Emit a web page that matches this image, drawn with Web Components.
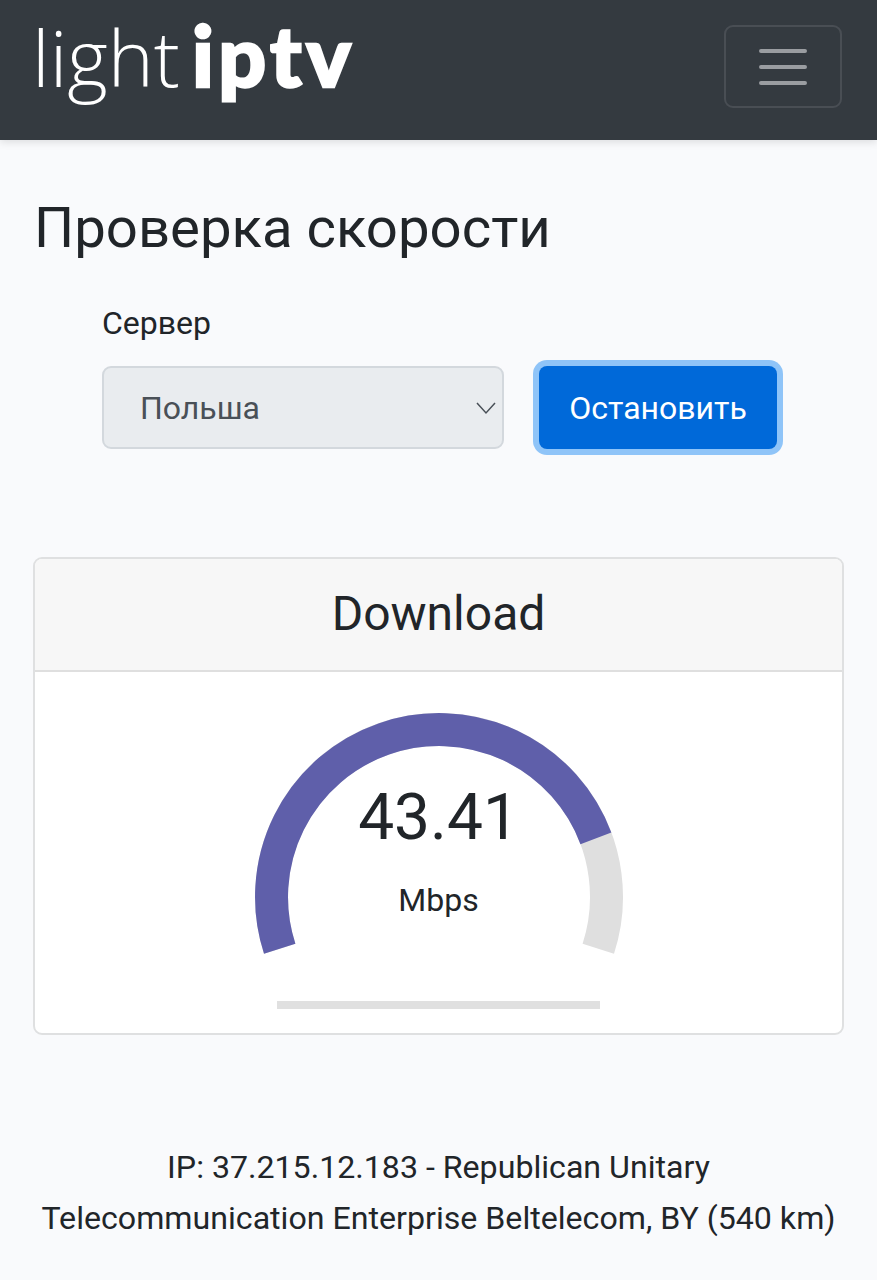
<!DOCTYPE html>
<html lang="ru">
<head>
<meta charset="utf-8">
<title>Проверка скорости</title>
<style>
    html, body {
        margin: 0;
        padding: 0;
        background: #f9fafc;
        color: #212529;
        font-family: Roboto, "Liberation Sans", sans-serif;
    }
    speed-page {
        display: block;
    }
</style>
</head>
<body>
<speed-page>
    <speed-navbar></speed-navbar>
    <speed-form></speed-form>
    <speed-card title="Download">
        <speed-gauge value="43.41" unit="Mbps"></speed-gauge>
    </speed-card>
    <speed-footer>
        IP: 37.215.12.183 - Republican Unitary<br>
        Telecommunication Enterprise Beltelecom, BY (540 km)
    </speed-footer>
</speed-page>

<script>
class SpeedNavbar extends HTMLElement {
    constructor() {
        super();
        this.attachShadow({ mode: "open" });
        this.shadowRoot.innerHTML = `
            <style>
                :host {
                    display: flex;
                    align-items: center;
                    justify-content: space-between;
                    height: 140px;
                    box-sizing: border-box;
                    padding: 0 35px 0 32px;
                    background: #343a40;
                    box-shadow: 0 2px 8px rgba(0, 0, 0, 0.12);
                }
                .logo {
                    display: flex;
                    align-items: baseline;
                    color: #fff;
                    line-height: 1;
                    margin-top: -30px;
                }
                .light {
                    font-family: "Open Sans", sans-serif;
                    font-weight: 300;
                    font-size: 78px;
                }
                .iptv {
                    font-family: Lato, sans-serif;
                    font-weight: 900;
                    font-size: 84px;
                    letter-spacing: 4.5px;
                    -webkit-text-stroke: 2.5px #fff;
                    margin-left: 12px;
                }
                button {
                    display: flex;
                    align-items: center;
                    justify-content: center;
                    width: 118px;
                    height: 83px;
                    margin: 0 0 7px 0;
                    padding: 0;
                    background: none;
                    border: 2px solid #494e54;
                    border-radius: 9px;
                }
            </style>
            <div class="logo"><span class="light">light</span><span class="iptv">iptv</span></div>
            <button aria-label="Menu">
                <svg width="50" height="36" viewBox="0 0 50 36">
                    <path d="M3 2h44M3 18h44M3 34h44" stroke="#9a9da1" stroke-width="4" stroke-linecap="round" fill="none"/>
                </svg>
            </button>
        `;
    }
}

class SpeedForm extends HTMLElement {
    constructor() {
        super();
        this.attachShadow({ mode: "open" });
        this.shadowRoot.innerHTML = `
            <style>
                :host {
                    display: block;
                    padding: 52px 33px 0 34px;
                }
                h1 {
                    margin: 0;
                    font-size: 56.3px;
                    font-weight: 400;
                    line-height: 72px;
                }
                .row {
                    display: flex;
                    gap: 35px;
                    margin: 0 0 0 68px;
                }
                label {
                    display: block;
                    margin: 39px 0 23px 68px;
                    font-size: 32px;
                    line-height: 40px;
                }
                .select {
                    position: relative;
                    width: 402px;
                    height: 83px;
                }
                select {
                    appearance: none;
                    width: 100%;
                    height: 100%;
                    box-sizing: border-box;
                    padding: 0 0 0 36px;
                    background: #e9ecef;
                    border: 2px solid #d3d8dd;
                    border-radius: 9px;
                    color: #495057;
                    font: 400 32px Roboto, sans-serif;
                    opacity: 1;
                }
                .select svg {
                    position: absolute;
                    right: 8px;
                    top: 35px;
                }
                button {
                    width: 238px;
                    height: 83px;
                    padding: 0;
                    background: #0069d9;
                    border: 0;
                    border-radius: 8px;
                    box-shadow: 0 0 0 6px #8fc4f8;
                    color: #fff;
                    font: 400 32px Roboto, sans-serif;
                }
            </style>
            <h1>Проверка скорости</h1>
            <label>Сервер</label>
            <div class="row">
                <div class="select">
                    <select disabled><option>Польша</option></select>
                    <svg width="20" height="14" viewBox="0 0 20 14">
                        <path d="M1 2l9 10 9-10" stroke="#495057" stroke-width="1.5" fill="none"/>
                    </svg>
                </div>
                <button>Остановить</button>
            </div>
        `;
    }
}

class SpeedCard extends HTMLElement {
    constructor() {
        super();
        this.attachShadow({ mode: "open" });
        this.shadowRoot.innerHTML = `
            <style>
                :host {
                    display: block;
                    box-sizing: border-box;
                    height: 478px;
                    margin: 108px 33px 0 33px;
                    background: #fff;
                    border: 2px solid #dfe0e1;
                    border-radius: 9px;
                    overflow: hidden;
                }
                header {
                    height: 113px;
                    box-sizing: border-box;
                    background: #f7f7f7;
                    border-bottom: 2px solid #dfdfdf;
                    font-size: 48px;
                    line-height: 110px;
                    text-align: center;
                }
            </style>
            <header></header>
            <slot></slot>
        `;
        this.shadowRoot.querySelector("header").textContent = this.getAttribute("title");
    }
}

class SpeedGauge extends HTMLElement {
    constructor() {
        super();
        this.attachShadow({ mode: "open" });
        this.shadowRoot.innerHTML = `
            <style>
                :host {
                    display: flex;
                    flex-direction: column;
                    align-items: center;
                    padding-top: 40px;
                    position: relative;
                }
                svg {
                    display: block;
                }
                .labels {
                    position: absolute;
                    top: 0;
                    left: 0;
                    right: 0;
                    text-align: center;
                }
                .value {
                    margin-top: 108px;
                    font-size: 64px;
                    line-height: 76px;
                }
                .unit {
                    margin-top: 24px;
                    font-size: 32px;
                    line-height: 40px;
                }
                .bar {
                    width: 323px;
                    height: 8px;
                    margin-top: 40px;
                    background: #e0e0e0;
                }
            </style>
            <svg width="370" height="249" viewBox="0 0 370 249">
                <path class="track" fill="none" stroke="#dfdfdf" stroke-width="33"/>
                <path class="fill" fill="none" stroke="#5f5faa" stroke-width="33"/>
            </svg>
            <div class="labels">
                <div class="value">${this.getAttribute("value")}</div>
                <div class="unit">${this.getAttribute("unit")}</div>
            </div>
            <div class="bar"></div>
        `;
        // angles in degrees, measured clockwise from 3 o'clock
        const arc = (from, to) => {
            const r = 167.5, c = 185;
            const pt = (a) => {
                const t = a * Math.PI / 180;
                return (c + r * Math.cos(t)).toFixed(2) + " " + (c + r * Math.sin(t)).toFixed(2);
            };
            return `M${pt(from)}A${r} ${r} 0 ${to - from > 180 ? 1 : 0} 1 ${pt(to)}`;
        };
        this.shadowRoot.querySelector(".track").setAttribute("d", arc(162, 378));
        this.shadowRoot.querySelector(".fill").setAttribute("d", arc(162, 339.5));
    }
}

class SpeedFooter extends HTMLElement {
    constructor() {
        super();
        this.attachShadow({ mode: "open" });
        this.shadowRoot.innerHTML = `
            <style>
                :host {
                    display: block;
                    margin-top: 107px;
                    padding-bottom: 36px;
                    font-size: 32.15px;
                    line-height: 51px;
                    text-align: center;
                }
            </style>
            <slot></slot>
        `;
    }
}

customElements.define("speed-navbar", SpeedNavbar);
customElements.define("speed-form", SpeedForm);
customElements.define("speed-card", SpeedCard);
customElements.define("speed-gauge", SpeedGauge);
customElements.define("speed-footer", SpeedFooter);
</script>
</body>
</html>
